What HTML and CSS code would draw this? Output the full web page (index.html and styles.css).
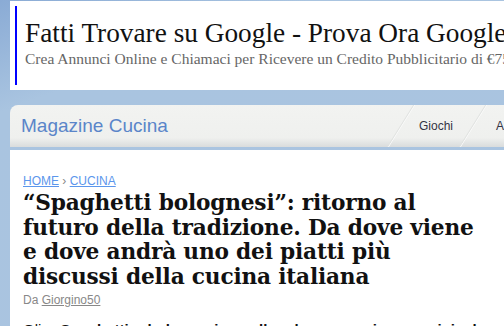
FILE: index.html
```html
<!DOCTYPE html>
<html>
    <head>
        <title>Magazine Cucina</title>
        <meta charset="utf-8" />
        <link rel="stylesheet" href="styles.css">
    </head>
    <body>
        <div class="page">
            <div class="ad">
                <div class="ad-inner">
                    <div class="ad-title">Fatti Trovare su Google - Prova Ora Google</div>
                    <div class="ad-text">Crea Annunci Online e Chiamaci per Ricevere un Credito Pubblicitario di €75</div>
                </div>
            </div>
            <nav class="nav">
                <span class="brand">Magazine Cucina</span>
                <div class="menu">
                    <a class="menu-item"><span>Giochi</span></a>
                    <a class="menu-item"><span>Altro</span></a>
                </div>
            </nav>
            <main class="content">
                <div class="crumbs"><a>HOME</a> <span class="sep">›</span> <a>CUCINA</a></div>
                <h1>“Spaghetti bolognesi”: ritorno al<br>futuro della tradizione. Da dove viene<br>e dove andrà uno dei piatti più<br>discussi della cucina italiana</h1>
                <div class="byline">Da <a>Giorgino50</a></div>
                <p>Gli <b>Spaghetti bolognesi, nella loro versione originale</b> internazionalmente conosciuta, sono oggi uno dei piatti più famosi al mondo.</p>
            </main>
        </div>
    </body>
</html>
```
FILE: styles.css
```css
html, body {
    margin: 0;
    padding: 0;
    height: 100%;
    overflow: hidden;
}
body {
    background: linear-gradient(160deg, #8aabd5 0%, #a9c4e0 22%, #aac4e0 100%);
    font-family: "Liberation Sans", Arial, sans-serif;
}
.page {
    padding-left: 10px;
}
.ad {
    margin-top: 1px;
    height: 89px;
    background: #fff;
    padding: 5px 0 5px 5px;
    box-sizing: border-box;
    white-space: nowrap;
    overflow: hidden;
}
.ad-inner {
    height: 79px;
    border-left: 2px solid #0000ff;
    padding-left: 8px;
}
.ad-title {
    font-family: "Liberation Serif", Georgia, serif;
    font-size: 27.3px;
    color: #111;
    padding-top: 12px;
    line-height: 31px;
}
.ad-text {
    font-family: "Liberation Serif", Georgia, serif;
    font-size: 15.5px;
    color: #666;
    line-height: 20px;
}
.nav {
    margin-top: 15px;
    height: 42px;
    display: flex;
    align-items: center;
    justify-content: space-between;
    background: linear-gradient(#f2f3f1 0%, #eff0ee 78%, #d9dcdc 100%);
    border-radius: 8px 0 0 0;
    overflow: hidden;
}
.brand {
    padding-left: 11px;
    font-size: 19px;
    color: #5a85c9;
}
.menu {
    display: flex;
    align-self: stretch;
    margin-right: -40px;
}
.menu-item {
    display: flex;
    align-items: center;
    justify-content: center;
    width: 71px;
    transform: skewX(-32deg);
    border-left: 1px solid #e0e2e0;
    box-shadow: inset 1px 0 #fbfbfb;
    font-size: 12px;
    color: #333344;
}
.menu-item span {
    transform: skewX(32deg);
}
.content {
    margin-top: 3px;
    background: #fff;
    padding: 24px 19px 0 13px;
    height: 200px;
}
.crumbs {
    font-size: 12px;
    line-height: 14px;
}
.crumbs a {
    color: #5b96ec;
    text-decoration: underline;
}
.crumbs .sep {
    color: #888;
}
h1 {
    margin: 3px 0 0 0;
    font-family: "DejaVu Serif", Georgia, serif;
    font-weight: bold;
    font-size: 21.7px;
    letter-spacing: -0.2px;
    line-height: 24.5px;
    white-space: nowrap;
    color: #111;
}
.byline {
    margin-top: 4px;
    font-size: 12px;
    color: #888;
}
.byline a {
    color: #888;
    text-decoration: underline;
}
p {
    margin: 14px 0 0 0;
    font-size: 15px;
    text-align: justify;
    color: #111;
}
```
